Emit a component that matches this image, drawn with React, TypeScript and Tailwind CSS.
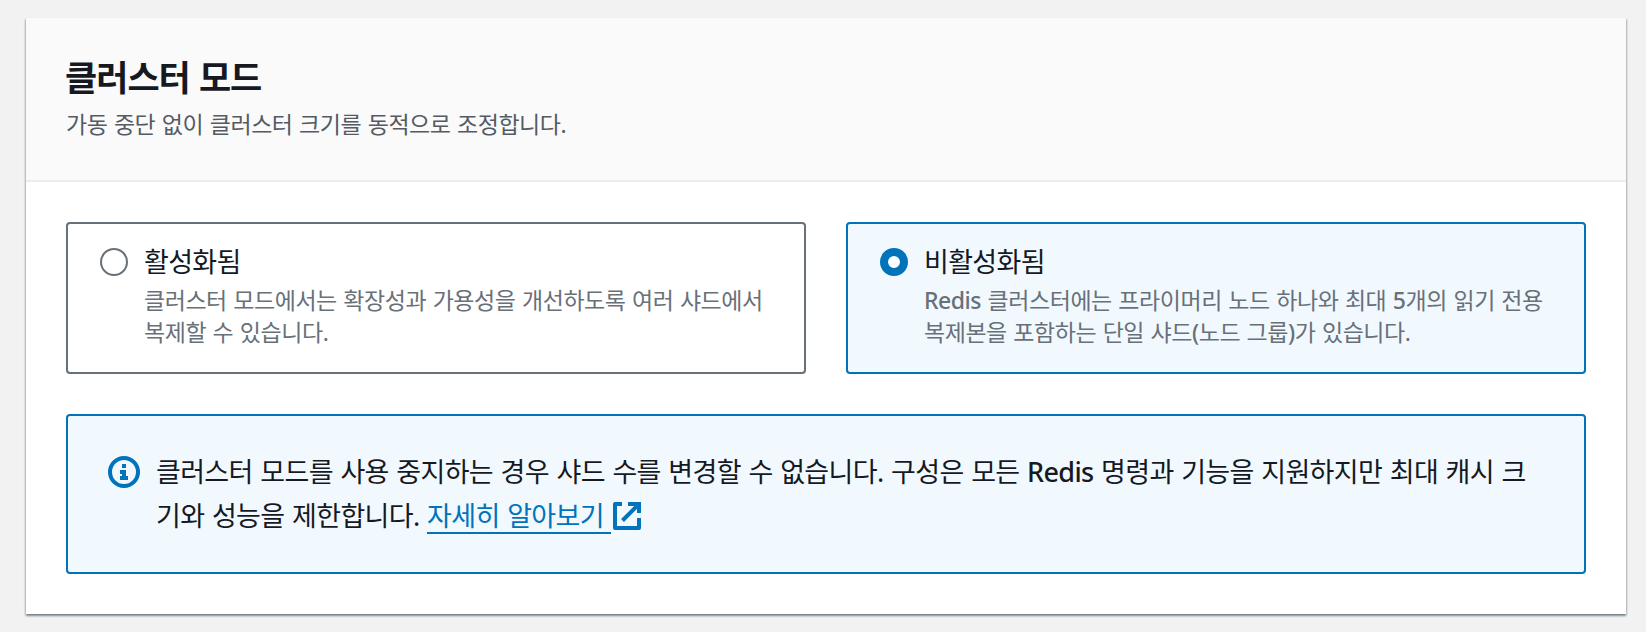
import React from "react";

const mid = "text-[27px] leading-[44px] tracking-[-0.66px] [word-spacing:1.2px]";
const small = "text-[23px] leading-8 tracking-[-0.46px] [word-spacing:1px] text-[#687078]";

function InfoIcon() {
  return (
    <svg className="mt-[7px] h-8 w-8 shrink-0" viewBox="0 0 32 32" fill="none">
      <circle cx="16" cy="16" r="14" stroke="#0073bb" strokeWidth="4" />
      <path d="M14 8h4v4h-4zM12 14h6v6h2v4h-8v-4h2v-2h-2z" fill="#0073bb" />
    </svg>
  );
}

function ExternalIcon() {
  return (
    <svg className="ml-0.5 inline-block h-7 w-7 align-[-4px]" viewBox="0 0 28 28" fill="none" stroke="#0073bb" strokeWidth="4">
      <path d="M9 2H2v24h24V16" strokeLinejoin="round" />
      <path d="M15 2h11v9M26 2L9.5 18.5" />
    </svg>
  );
}

function Latin({ children }: { children: string }) {
  return <span className="font-medium">{children}</span>;
}

function Option({
  title,
  lines,
  selected = false,
}: {
  title: string;
  lines: React.ReactNode[];
  selected?: boolean;
}) {
  return (
    <label
      className={`flex h-[152px] gap-4 rounded-[4px] border-2 pl-8 pt-4 ${
        selected ? "border-[#0073bb] bg-[#f1f9ff]" : "border-[#687078] bg-white"
      }`}
    >
      <span
        className={`mt-2 h-7 w-7 shrink-0 rounded-full bg-white ${
          selected ? "border-8 border-[#0073bb]" : "border-2 border-[#687078]"
        }`}
      />
      <span className="block whitespace-nowrap">
        <span className={`block ${mid}`}>{title}</span>
        {lines.map((line, i) => (
          <span key={i} className={`block ${small}`}>{line}</span>
        ))}
      </span>
    </label>
  );
}

export default function App() {
  return (
    <div className="h-[632px] w-[1646px] bg-[#f2f2f2] pl-[26px] pt-[18px] font-['Noto_Sans','Noto_Sans_CJK_KR',sans-serif] text-[#16191f]">
      <section className="h-[596px] w-[1600px] bg-white shadow-[0_2px_2px_0_rgba(0,28,36,0.4),1px_1px_2px_0_rgba(0,28,36,0.15),-1px_1px_2px_0_rgba(0,28,36,0.15)]">
        <header className="h-[164px] border-b-2 border-[#eaeded] bg-[#fafafa] px-10 pt-[38px]">
          <h2 className="-ml-px text-[35px] font-bold leading-[44px] tracking-[-1px] [word-spacing:1px]">클러스터 모드</h2>
          <p className="mt-2 text-[23px] leading-8 tracking-[-0.46px] text-[#545b64] [word-spacing:1px]">
            가동 중단 없이 클러스터 크기를 동적으로 조정합니다.
          </p>
        </header>
        <div className="flex flex-col gap-10 p-10">
          <div className="grid grid-cols-2 gap-10">
            <Option
              title="활성화됨"
              lines={["클러스터 모드에서는 확장성과 가용성을 개선하도록 여러 샤드에서", "복제할 수 있습니다."]}
            />
            <Option
              selected
              title="비활성화됨"
              lines={[
                <>
                  <Latin>Redis</Latin> 클러스터에는 프라이머리 노드 하나와 최대 <Latin>5</Latin>개의 읽기 전용
                </>,
                <>
                  복제본을 포함하는 단일 샤드<Latin>(</Latin>노드 그룹<Latin>)</Latin>가 있습니다.
                </>,
              ]}
            />
          </div>
          <div className="flex h-40 gap-4 rounded-[4px] border-2 border-[#0073bb] bg-[#f1f9ff] pl-10 pt-[33px]">
            <InfoIcon />
            <p className={`mt-px whitespace-nowrap ${mid}`}>
              클러스터 모드를 사용 중지하는 경우 샤드 수를 변경할 수 없습니다. 구성은 모든 <Latin>Redis</Latin> 명령과 기능을 지원하지만 최대 캐시 크
              <br />
              기와 성능을 제한합니다.{" "}
              <a className="inline-block border-b-2 border-[#0073bb] pr-[7px] leading-8 text-[#0073bb]">자세히 알아보기</a>
              <ExternalIcon />
            </p>
          </div>
        </div>
      </section>
    </div>
  );
}
